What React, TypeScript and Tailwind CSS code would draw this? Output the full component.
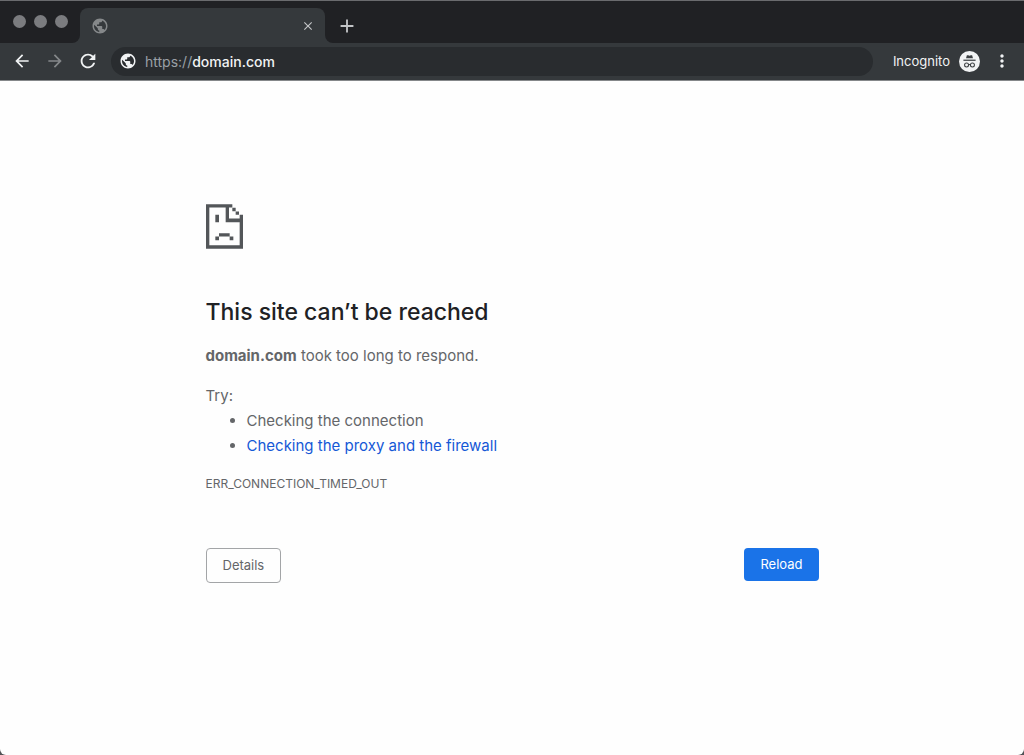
import { MdAdd, MdArrowBack, MdArrowForward, MdClose, MdMoreVert, MdPublic, MdRefresh } from "react-icons/md";

function WindowControls() {
  return (
    <div className="flex w-20 shrink-0 gap-2 rounded-br-lg bg-[#202124] pt-[14px] pl-[13px]">
      {["Close window", "Minimize window", "Zoom window"].map((label) => (
        <button key={label} type="button" aria-label={label} className="size-[13px] rounded-full bg-[#7b7c7f]" />
      ))}
    </div>
  );
}

function TabStrip() {
  return (
    <div className="flex h-[42px] bg-[#35393c]">
      <WindowControls />
      <div className="w-[245px] shrink-0 bg-[#202124] pt-[7px]">
        <div className="flex h-[35px] items-center justify-between rounded-t-lg bg-[#35393c] pr-[10px] pl-[11px]">
          <MdPublic className="size-[18px] text-[#85888a]" />
          <button type="button" aria-label="Close tab" className="text-[#c3c5c7]">
            <MdClose className="size-[14px]" />
          </button>
        </div>
      </div>
      <div className="flex flex-1 items-center rounded-bl-lg bg-[#202124] pt-[7px] pl-[11px]">
        <button type="button" aria-label="New tab" className="text-[#c3c5c7]">
          <MdAdd className="size-[22px]" />
        </button>
      </div>
    </div>
  );
}

function IncognitoBadge() {
  return (
    <svg viewBox="0 0 20 20" className="size-[21px]" aria-hidden="true">
      <circle cx="10" cy="10" r="10" fill="#f1f3f4" />
      <path d="M7.5 4h1.2l1.3.5 1.3-.5h1.2l.8 3H6.7z" fill="#3c4043" />
      <path d="M4.2 8.2h11.6v1.2H4.2z" fill="#3c4043" />
      <g fill="none" stroke="#3c4043" strokeWidth="1">
        <circle cx="7.2" cy="13.4" r="1.9" />
        <circle cx="12.8" cy="13.4" r="1.9" />
        <path d="M9.1 13.1q.9-.6 1.8 0" />
      </g>
    </svg>
  );
}

function Toolbar() {
  return (
    <div className="flex h-[38px] items-center border-b border-[#85888a] bg-[#35393c] pr-3 pb-px pl-3">
      <button type="button" aria-label="Back" className="text-[#f1f3f4]">
        <MdArrowBack className="size-5" />
      </button>
      <button type="button" aria-label="Forward" className="ml-[13px] text-[#85888a]">
        <MdArrowForward className="size-5" />
      </button>
      <button type="button" aria-label="Reload page" className="ml-3 text-[#f1f3f4]">
        <MdRefresh className="size-[22px]" />
      </button>
      <div className="ml-3 flex h-[29px] min-w-0 flex-1 items-center rounded-full bg-[#292c2f] pl-2 text-[14px]">
        <MdPublic className="size-[18px] shrink-0 text-[#f1f3f4]" />
        <a href="https://domain.com" className="ml-2 font-medium text-[#f1f3f4]">
          <span className="font-normal text-[#9aa0a6]">https://</span>domain.com
        </a>
      </div>
      <button type="button" className="ml-5 flex items-center gap-[9px] text-[13px] leading-[21px] text-[#f1f3f4]">
        Incognito
        <IncognitoBadge />
      </button>
      <button type="button" aria-label="Menu" className="ml-3 text-[#f1f3f4]">
        <MdMoreVert className="size-5" />
      </button>
    </div>
  );
}

function SadPage() {
  return (
    <svg viewBox="0 0 111 134" className="h-[45px] w-[37px]" fill="#535659" shapeRendering="geometricPrecision" aria-hidden="true">
      <path d="M0 0H79V10H10V123H101V54H59V0H69V43H101V32H111V134H0Z" />
      <path d="M79 11h10v10H79zM89 22h10v10H89z" />
      <path d="M28 32h11v22H28zM39 87h32v10H39zM28 97h11v11H28zM71 97h11v11H71z" />
    </svg>
  );
}

export default function App() {
  return (
    <div className="flex min-h-screen flex-col bg-[#505255] font-['Inter',sans-serif]">
      <div className="flex flex-1 flex-col overflow-hidden rounded-b-md bg-[#fefefe]">
        <header className="border-t border-[#6a6b6e] bg-[#35393c]">
          <TabStrip />
          <Toolbar />
        </header>
        <main className="mx-auto w-full max-w-[613px] pt-[123px] text-[15px] leading-6 text-[#646669]">
          <SadPage />
          <h1 className="mt-[47px] text-[23px] leading-8 font-medium text-[#202124]">This site can’t be reached</h1>
          <p className="mt-4">
            <strong className="font-bold">domain.com</strong> took too long to respond.
          </p>
          <p className="mt-4">Try:</p>
          <ul className="list-disc pl-[41px] leading-[25px]">
            <li>Checking the connection</li>
            <li>
              <a href="#proxy" className="text-[#1558d6]">Checking the proxy and the firewall</a>
            </li>
          </ul>
          <p className="mt-[14px] text-[12px]">ERR_CONNECTION_TIMED_OUT</p>
          <div className="mt-[52px] flex items-start justify-between text-[13px] leading-[17px]">
            <button type="button" className="rounded border border-[#a3a5a7] px-4 py-2">Details</button>
            <button type="button" className="rounded bg-[#1a73e8] px-4 py-2 text-white">Reload</button>
          </div>
        </main>
      </div>
    </div>
  );
}
